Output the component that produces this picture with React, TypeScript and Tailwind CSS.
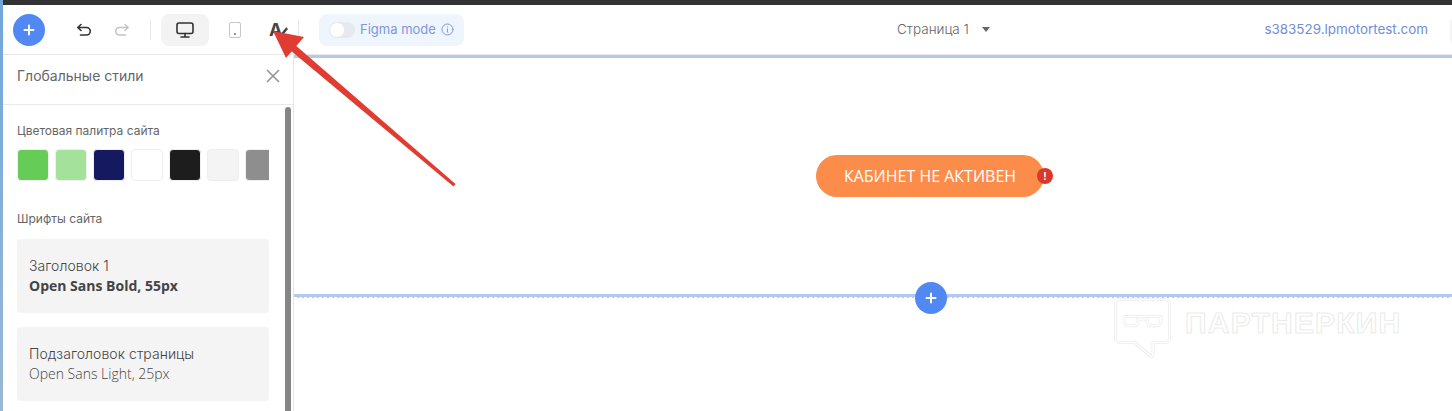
import React from "react";

const inter = "font-['Inter','Liberation_Sans',sans-serif]";
const open = "font-['Open_Sans','Liberation_Sans',sans-serif]";

function Plus({ size = 12 }: { size?: number }) {
  return (
    <svg width={size} height={size} viewBox="0 0 12 12" fill="none" stroke="white" strokeWidth="2" strokeLinecap="round">
      <path d="M6 1.5v9M1.5 6h9" />
    </svg>
  );
}

function Toolbar() {
  return (
    <div className={`h-[50px] shrink-0 flex items-center border-b border-[#e9e9e9] bg-white relative ${inter}`}>
      <div className="ml-[10px] w-8 h-8 rounded-full bg-[#5288f3] flex items-center justify-center">
        <Plus />
      </div>
      <svg className="ml-[31px]" width="16" height="14" viewBox="0 0 16 14" fill="none" stroke="#333" strokeWidth="1.6" strokeLinecap="round" strokeLinejoin="round">
        <path d="M5 1.5 1.8 4.5 5 7.5M2 4.5h8.5a3.7 3.7 0 0 1 0 7.5H4.5" />
      </svg>
      <svg className="ml-[22px]" width="16" height="14" viewBox="0 0 16 14" fill="none" stroke="#c4c4c4" strokeWidth="1.6" strokeLinecap="round" strokeLinejoin="round">
        <path d="M11 1.5l3.2 3L11 7.5M14 4.5H5.5a3.7 3.7 0 0 0 0 7.5h6" />
      </svg>
      <div className="ml-[20px] w-px h-5 bg-[#e6e6e6]" />
      <div className="ml-[10px] w-12 h-8 rounded-lg bg-[#f3f3f3] flex items-center justify-center">
        <svg width="18" height="16" viewBox="0 0 18 16" fill="none" stroke="#333" strokeWidth="1.6" strokeLinecap="round" strokeLinejoin="round">
          <rect x="1" y="1" width="16" height="10.5" rx="2" />
          <path d="M9 11.5V15M5 15h8" />
        </svg>
      </div>
      <div className="ml-[20px] w-[12px] h-[16px] rounded-[2px] border-[1.5px] border-[#c8c8c8] flex items-end justify-center pb-[2px]">
        <div className="w-[2px] h-[2px] bg-[#999]" />
      </div>
      <div className="ml-[28px] w-[20px] flex items-center">
        <span className="text-[#444] text-[18px] font-bold leading-none">A</span>
        <svg className="-ml-[1px] mt-[4px]" width="7" height="9" viewBox="0 0 8 10" fill="#444">
          <path d="M6 0l2 2-5 6-3 1 1-3z" />
        </svg>
      </div>
      <div className="ml-[9px] w-px h-5 bg-[#e6e6e6]" />
      <div className="ml-[20px] w-[145px] h-8 rounded-lg bg-[#eef5fd] flex items-center pl-[10px]">
        <div className="w-[26px] h-[16px] rounded-full bg-[#e6e9ee] flex items-center pl-[1px]">
          <div className="w-[14px] h-[14px] rounded-full bg-white" />
        </div>
        <span className="ml-[5px] text-[13px] text-[#7f96e0]">Figma mode</span>
        <svg className="ml-[5px]" width="13" height="13" viewBox="0 0 13 13" fill="none" stroke="#7f96e0" strokeWidth="1" strokeLinecap="round">
          <circle cx="6.5" cy="6.5" r="5.5" />
          <path d="M6.5 6v3.2M6.5 3.8v.2" />
        </svg>
      </div>
      <div className="flex-1 flex items-center pl-[433px]">
        <span className="text-[13.5px] font-light text-[#666]">Страница 1</span>
        <div className="ml-[13px] w-0 h-0 border-x-[4.5px] border-x-transparent border-t-[5px] border-t-[#666]" />
      </div>
      <span className="text-[13.4px] text-[#6f8dd8] mr-[24px]">s383529.lpmotortest.com</span>
      <div className="absolute right-[-10px] top-[12px] w-3 h-7 rounded-l-md bg-[#f4f4f4]" />
    </div>
  );
}

function Swatch({ className }: { className: string }) {
  return <div className={`w-[32px] h-[32px] shrink-0 rounded-[4px] ${className}`} />;
}

function FontCard({ title, sub, bold }: { title: string; sub: string; bold?: boolean }) {
  return (
    <div className="h-[74px] rounded-[4px] bg-[#f4f4f4] px-3 flex flex-col justify-center">
      <div className={`${inter} text-[14px] leading-5 font-light tracking-[0.05px] text-[#444]`}>{title}</div>
      <div className={`${open} text-[14px] leading-5 ${bold ? "font-bold text-[#444]" : "font-light text-[#444]"}`}>{sub}</div>
    </div>
  );
}

function Panel() {
  return (
    <div className={`w-[291px] shrink-0 border-r border-[#e6e6e6] bg-white flex flex-col ${inter} relative`}>
      <div className="h-[50px] shrink-0 border-b border-[#e9e9e9] flex items-center justify-between pl-[14px] pr-[13px] pb-[8px]">
        <span className="text-[14px] text-[#666]">Глобальные стили</span>
        <svg width="14" height="14" viewBox="0 0 14 14" stroke="#999" strokeWidth="1.7" strokeLinecap="round">
          <path d="M1.5 1.5l11 11M12.5 1.5l-11 11" />
        </svg>
      </div>
      <div className="pl-[14px] pr-[24px] pt-[19px]">
        <div className="text-[12px] leading-[14px] text-[#666]">Цветовая палитра сайта</div>
        <div className="mt-[11px] flex gap-[6px] overflow-hidden w-[252px]">
          <Swatch className="bg-[#65cc58] border border-[#f0f0f0]" />
          <Swatch className="bg-[#a4e19a] border border-[#f0f0f0]" />
          <Swatch className="bg-[#151a60] border border-[#f0f0f0]" />
          <Swatch className="bg-white border border-[#eeeeee]" />
          <Swatch className="bg-[#1d1d1d] border border-[#f0f0f0]" />
          <Swatch className="bg-[#f4f4f4] border border-[#eeeeee]" />
          <Swatch className="bg-[#8e8e8e] border border-[#f0f0f0]" />
        </div>
        <div className="mt-[31px] text-[12px] leading-[14px] text-[#666]">Шрифты сайта</div>
        <div className="mt-[13px] flex flex-col gap-[14px] w-[252px]">
          <FontCard title="Заголовок 1" sub="Open Sans Bold, 55px" bold />
          <FontCard title="Подзаголовок страницы" sub="Open Sans Light, 25px" />
        </div>
      </div>
      <div className="absolute left-[282px] top-[52px] w-[6px] h-[360px] rounded-t-full bg-[#858585]" />
    </div>
  );
}

function Canvas() {
  return (
    <div className="flex-1 flex flex-col bg-white relative">
      <div className="h-[3px] bg-[#b5c9f0] shrink-0" />
      <div className="h-[236px] shrink-0 flex items-start justify-center pt-[97px] pl-[114px]">
        <div className={`${open} relative w-[228px] h-[42px] rounded-full bg-[#fb8c49] text-white text-[16px] flex items-center justify-center`}>
          КАБИНЕТ НЕ АКТИВЕН
          <div className="absolute -right-[9px] top-[13px] w-4 h-4 rounded-full bg-[#d8392a] text-white text-[10px] font-bold flex items-center justify-center">!</div>
        </div>
      </div>
      <div className="h-[4px] bg-[#b5c9f0] shrink-0 relative border-b border-dashed border-[#ffffff]">
        <div className="absolute left-[621px] -top-[12px] w-8 h-8 rounded-full bg-[#5288f3] flex items-center justify-center">
          <Plus />
        </div>
      </div>
      <div className="absolute left-[820px] top-[243px] flex items-start">
        <svg width="58" height="62" viewBox="0 0 58 62" fill="none" strokeLinejoin="round" strokeLinecap="round">
          <g stroke="#ebebeb" strokeWidth="3">
            <path d="M6 1.5h45a4.5 4.5 0 0 1 4.5 4.5v34a4.5 4.5 0 0 1-4.5 4.5H39v12q0 3-3 1L21 44.5H6A4.5 4.5 0 0 1 1.5 40V6A4.5 4.5 0 0 1 6 1.5z" />
            <path d="M10 20q0-1.5 1.500-1.500h34q1.500 0 1.500 1.500v2q0 6-6 6h-2q-6 0-6-6v-1h-9v1q0 6-6 6h-2q-6 0-6-6z" />
          </g>
          <g stroke="#ffffff" strokeWidth="1.500">
            <path d="M6 1.5h45a4.5 4.5 0 0 1 4.5 4.5v34a4.5 4.5 0 0 1-4.5 4.5H39v12q0 3-3 1L21 44.5H6A4.5 4.5 0 0 1 1.5 40V6A4.5 4.5 0 0 1 6 1.5z" />
            <path d="M10 20q0-1.5 1.500-1.500h34q1.500 0 1.500 1.500v2q0 6-6 6h-2q-6 0-6-6v-1h-9v1q0 6-6 6h-2q-6 0-6-6z" />
          </g>
        </svg>
        <span className="ml-[13px] mt-[8px] text-[30px] leading-[34px] font-bold tracking-[1.2px] text-white [-webkit-text-stroke:1px_#ebebeb] font-['Liberation_Sans',sans-serif]">ПАРТНЕРКИН</span>
      </div>
    </div>
  );
}

export default function App() {
  return (
    <div className="w-[1452px] h-[411px] relative overflow-hidden bg-white flex">
      <div className="w-[3px] shrink-0 bg-gradient-to-b from-[#6fa6dc] to-[#9ab8d6]" />
      <div className="flex-1 flex flex-col min-w-0">
        <div className="h-[5px] shrink-0 bg-[#333333]" />
        <Toolbar />
        <div className="flex flex-1 min-h-0">
          <Panel />
          <Canvas />
        </div>
      </div>
      <svg className="absolute left-0 top-0 pointer-events-none" width="1452" height="411" viewBox="0 0 1452 411">
        <path d="M455.5 184 L294 44 L290 50 L453.5 186.5 Z" fill="#e03c31" />
        <path d="M273 31 L304 37 L286 58 Z" fill="#e03c31" />
      </svg>
    </div>
  );
}
